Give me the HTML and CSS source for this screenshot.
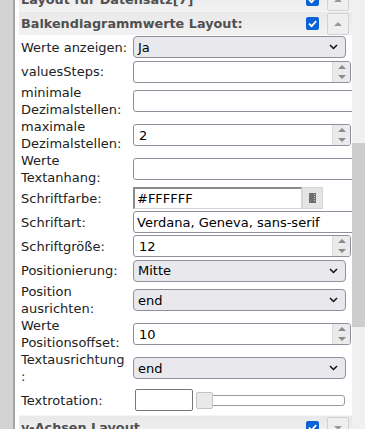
FILE: index.html
```html
<!DOCTYPE html>
<html lang="de">
<head>
<meta charset="utf-8">
<title>Balkendiagrammwerte Layout</title>
<link rel="stylesheet" href="styles.css">
</head>
<body>
<div class="frame">
  <div class="edge"></div>
  <div class="panel">
    <div class="content">
      <div class="hdr">
        <span class="hdr-title">Layout für Datensatz[7]</span>
        <svg class="chk" width="13" height="13" viewBox="0 0 13 13"><rect width="13" height="13" rx="2" fill="#0b62d6"/><path d="M3 6.6 L5.6 9.1 L10.2 4.2" stroke="#fff" stroke-width="1.8" fill="none"/></svg>
        <span class="hbtn"><i class="tri-up"></i></span>
      </div>
      <div class="hdr">
        <span class="hdr-title">Balkendiagrammwerte Layout:</span>
        <svg class="chk" width="13" height="13" viewBox="0 0 13 13"><rect width="13" height="13" rx="2" fill="#0b62d6"/><path d="M3 6.6 L5.6 9.1 L10.2 4.2" stroke="#fff" stroke-width="1.8" fill="none"/></svg>
        <span class="hbtn"><i class="tri-up"></i></span>
      </div>

      <div class="form">
        <label class="lbl">Werte anzeigen:</label>
        <div class="sel"><span>Ja</span><svg width="9" height="6" viewBox="0 0 9 6"><path d="M1 1 L4.5 4.5 L8 1" stroke="#111" stroke-width="1.5" fill="none"/></svg></div>

        <label class="lbl">valuesSteps:</label>
        <div class="num"><input type="text" value=""><span class="spin"><i class="up"></i><i class="dn"></i></span></div>

        <label class="lbl">minimale Dezimalstellen:</label>
        <input class="txt" type="text" value="">

        <label class="lbl">maximale Dezimalstellen:</label>
        <div class="num"><input type="text" value="2"><span class="spin"><i class="up"></i><i class="dn"></i></span></div>

        <label class="lbl">Werte Textanhang:</label>
        <input class="txt" type="text" value="">

        <label class="lbl">Schriftfarbe:</label>
        <div class="color"><input class="cin" type="text" value="#FFFFFF"><span class="cbtn"><svg width="7" height="10" viewBox="0 0 7 10"><rect width="7" height="10" fill="#6f6f6f"/><path d="M5.5 1 V9" stroke="#bdbdbd" stroke-width="1" stroke-dasharray="1 1"/></svg></span></div>

        <label class="lbl">Schriftart:</label>
        <input class="txt" type="text" value="Verdana, Geneva, sans-serif">

        <label class="lbl">Schriftgröße:</label>
        <div class="num"><input type="text" value="12"><span class="spin"><i class="up"></i><i class="dn"></i></span></div>

        <label class="lbl">Positionierung:</label>
        <div class="sel"><span>Mitte</span><svg width="9" height="6" viewBox="0 0 9 6"><path d="M1 1 L4.5 4.5 L8 1" stroke="#111" stroke-width="1.5" fill="none"/></svg></div>

        <label class="lbl">Position ausrichten:</label>
        <div class="sel"><span>end</span><svg width="9" height="6" viewBox="0 0 9 6"><path d="M1 1 L4.5 4.5 L8 1" stroke="#111" stroke-width="1.5" fill="none"/></svg></div>

        <label class="lbl">Werte Positionsoffset:</label>
        <div class="num"><input type="text" value="10"><span class="spin"><i class="up"></i><i class="dn"></i></span></div>

        <label class="lbl">Textausrichtung<br>:</label>
        <div class="sel"><span>end</span><svg width="9" height="6" viewBox="0 0 9 6"><path d="M1 1 L4.5 4.5 L8 1" stroke="#111" stroke-width="1.5" fill="none"/></svg></div>

        <label class="lbl">Textrotation:</label>
        <div class="rot"><input class="rin" type="text" value=""><div class="slider"><span class="knob"></span></div></div>
      </div>

      <div class="hdr">
        <span class="hdr-title">y-Achsen Layout</span>
        <svg class="chk" width="13" height="13" viewBox="0 0 13 13"><rect width="13" height="13" rx="2" fill="#0b62d6"/><path d="M3 6.6 L5.6 9.1 L10.2 4.2" stroke="#fff" stroke-width="1.8" fill="none"/></svg>
        <span class="hbtn"><i class="tri-dn"></i></span>
      </div>
    </div>
  </div>
  <div class="sb"><div class="thumb"></div></div>
</div>
</body>
</html>
```

FILE: styles.css
```css
html, body {
  margin: 0;
  padding: 0;
}
body {
  font-family: "DejaVu Sans", Verdana, sans-serif;
  font-size: 13px;
  color: #222;
  overflow: hidden;
  background: #fff;
}
.frame {
  display: flex;
  height: 429px;
  overflow: hidden;
}
.edge {
  width: 13px;
  flex: none;
  background: #d3d3d3;
  border-right: 2px solid #a6a6a6;
}
.panel {
  flex: 1;
  min-width: 0;
  overflow: hidden;
  padding-left: 4px;
  background: #fff;
}
.sb {
  width: 13px;
  flex: none;
  background: #f0f0f0;
}
.sb .thumb {
  margin-top: 143px;
  height: 184px;
  background: #cdcdcd;
}
.content {
  margin-top: -13px;
}
.hdr {
  display: flex;
  align-items: center;
  height: 23px;
  border-top: 1px solid #f6f6f6;
  background: linear-gradient(#e9e9e9, #f2f2f2);
  padding-left: 2px;
  font-weight: bold;
  font-size: 12.8px;
  color: #505050;
}
.hdr-title {
  flex: 1;
  white-space: nowrap;
  overflow: hidden;
}
.chk {
  display: block;
  margin-right: 8px;
}
.hbtn {
  width: 22px;
  height: 22px;
  box-sizing: border-box;
  border: 1px solid #d2d2d2;
  border-radius: 2px;
  background: #efefef;
  margin-right: 3px;
  display: flex;
  align-items: center;
  justify-content: center;
}
.tri-up {
  border-left: 4px solid transparent;
  border-right: 4px solid transparent;
  border-bottom: 4px solid #9a9a9a;
}
.tri-dn {
  border-left: 4px solid transparent;
  border-right: 4px solid transparent;
  border-top: 4px solid #9a9a9a;
}
.form {
  display: grid;
  grid-template-columns: 110px 219px;
  grid-template-rows: 24px 25px 34px 34px 34px 24px 24px 24px 25px 34px 34px 34px 30px;
  column-gap: 4px;
  align-items: center;
}
.lbl {
  padding-left: 2px;
  line-height: 17px;
  overflow-wrap: break-word;
  color: #222;
}
.sel {
  width: 213px;
  height: 22px;
  box-sizing: border-box;
  border: 1px solid #8f8f9d;
  border-radius: 4px;
  background: #e9e9ed;
  display: flex;
  align-items: center;
  padding-left: 4px;
  color: #000;
}
.sel span {
  flex: 1;
}
.sel svg {
  display: block;
  margin-right: 7px;
}
.txt {
  width: 240px;
  height: 22px;
  box-sizing: border-box;
  border: 1px solid #8f8f9d;
  border-radius: 3px;
  padding: 0 3px;
  font: inherit;
  color: #000;
  background: #fff;
  outline: none;
}
.num {
  display: flex;
  width: 218px;
  height: 22px;
  box-sizing: border-box;
  border: 1px solid #8f8f9d;
  border-radius: 3px;
  background: #fff;
  overflow: hidden;
}
.num input {
  flex: 1;
  min-width: 0;
  border: 0;
  padding: 0 5px;
  font: inherit;
  color: #000;
  background: transparent;
  outline: none;
}
.spin {
  width: 17px;
  flex: none;
  display: flex;
  flex-direction: column;
  background: #ebebeb;
  border-left: 1px solid #d9d9d9;
}
.spin i {
  flex: 1;
  display: flex;
  align-items: center;
  justify-content: center;
}
.spin .up::before {
  content: "";
  border-left: 4px solid transparent;
  border-right: 4px solid transparent;
  border-bottom: 4px solid #8c8c8c;
}
.spin .dn::before {
  content: "";
  border-left: 4px solid transparent;
  border-right: 4px solid transparent;
  border-top: 4px solid #8c8c8c;
}
.color {
  display: flex;
}
.cin {
  width: 169px;
  height: 22px;
  box-sizing: border-box;
  border-style: solid;
  border-width: 2px 1px 1px 2px;
  border-color: #8a8a8a #d6d6d6 #d6d6d6 #8a8a8a;
  padding: 0 2px;
  font: inherit;
  color: #000;
  background: #fff;
  outline: none;
}
.cbtn {
  width: 21px;
  height: 22px;
  box-sizing: border-box;
  border: 1px solid #d6d6d6;
  background: #e4e4e4;
  display: flex;
  align-items: center;
  justify-content: center;
}
.rot {
  display: flex;
  align-items: center;
}
.rin {
  width: 58px;
  height: 22px;
  margin-left: 2px;
  box-sizing: border-box;
  border: 1px solid #767676;
  border-radius: 2px;
  padding: 0 3px;
  font: inherit;
  background: #fff;
  outline: none;
}
.slider {
  position: relative;
  width: 149px;
  height: 11px;
  margin-left: 3px;
  box-sizing: border-box;
  border: 1px solid #9a9a9a;
  border-radius: 3px;
  background: #fff;
}
.knob {
  position: absolute;
  left: -1px;
  top: -4px;
  width: 17px;
  height: 17px;
  box-sizing: border-box;
  border: 1px solid #c4c4c4;
  border-radius: 2px;
  background: #e9e9e9;
}
```
